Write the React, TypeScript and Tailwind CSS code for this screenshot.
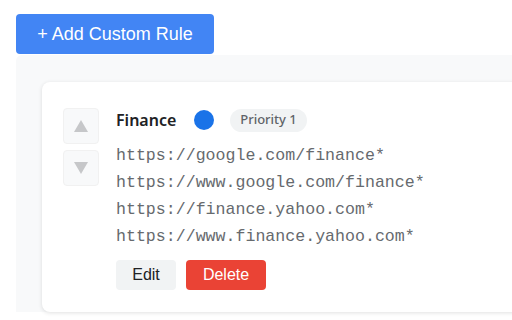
const urls = [
  "https://google.com/finance*",
  "https://www.google.com/finance*",
  "https://finance.yahoo.com*",
  "https://www.finance.yahoo.com*",
];

function MoveButton({ dir }: { dir: "up" | "down" }) {
  return (
    <button className="flex h-[36px] w-[36px] items-center justify-center rounded-[4px] border border-[#f1f1f1] bg-[#f8f9fa]">
      <svg width="14" height="12" viewBox="0 0 14 12">
        <path d={dir === "up" ? "M7 0L14 12H0Z" : "M0 0H14L7 12Z"} fill="#c6c7c9" />
      </svg>
    </button>
  );
}

export default function App() {
  return (
    <div className="h-[320px] w-[512px] overflow-hidden bg-white pl-[16px] pt-[14px] font-['Liberation_Sans',Arial,sans-serif]">
      <button className="h-[40px] w-[198px] rounded-[4px] bg-[#4285f4] text-[18px] text-white">
        + Add Custom Rule
      </button>

      <div className="mt-[1px] w-[600px] rounded-tl-[6px] bg-[#f8f9fa] pl-[26px] pt-[27px]">
        <div className="flex h-[230px] w-[560px] gap-[17px] rounded-[8px] bg-white pl-[21px] pt-[26px] shadow-[0_1px_4px_rgba(0,0,0,0.12)]">
          <div className="flex flex-col gap-[6px]">
            <MoveButton dir="up" />
            <MoveButton dir="down" />
          </div>

          <div className="flex flex-col">
            <div className="flex h-[24px] items-center">
              <span className="w-[62px] font-['Noto_Sans',sans-serif] text-[16px] font-semibold text-[#202124]">
                Finance
              </span>
              <span className="ml-[16px] h-[20px] w-[20px] rounded-full bg-[#1a73e8]" />
              <span className="ml-[16px] flex h-[23px] w-[77px] items-center justify-center rounded-full bg-[#f1f3f4] font-['Noto_Sans',sans-serif] text-[13px] font-medium text-[#5f6368]">
                Priority 1
              </span>
            </div>

            <div className="mt-[10px] flex flex-col">
              {urls.map((u) => (
                <div
                  key={u}
                  className="h-[27px] font-['Liberation_Mono','Courier_New',monospace] text-[16.6px] leading-[27px] text-[#666a6e]"
                >
                  {u}
                </div>
              ))}
            </div>

            <div className="mt-[10px] flex gap-[10px]">
              <button className="h-[30px] w-[60px] rounded-[4px] bg-[#f1f3f4] text-[16px] text-[#202124]">
                Edit
              </button>
              <button className="h-[30px] w-[80px] rounded-[4px] bg-[#ea4335] text-[16px] text-white">
                Delete
              </button>
            </div>
          </div>
        </div>
      </div>
    </div>
  );
}
